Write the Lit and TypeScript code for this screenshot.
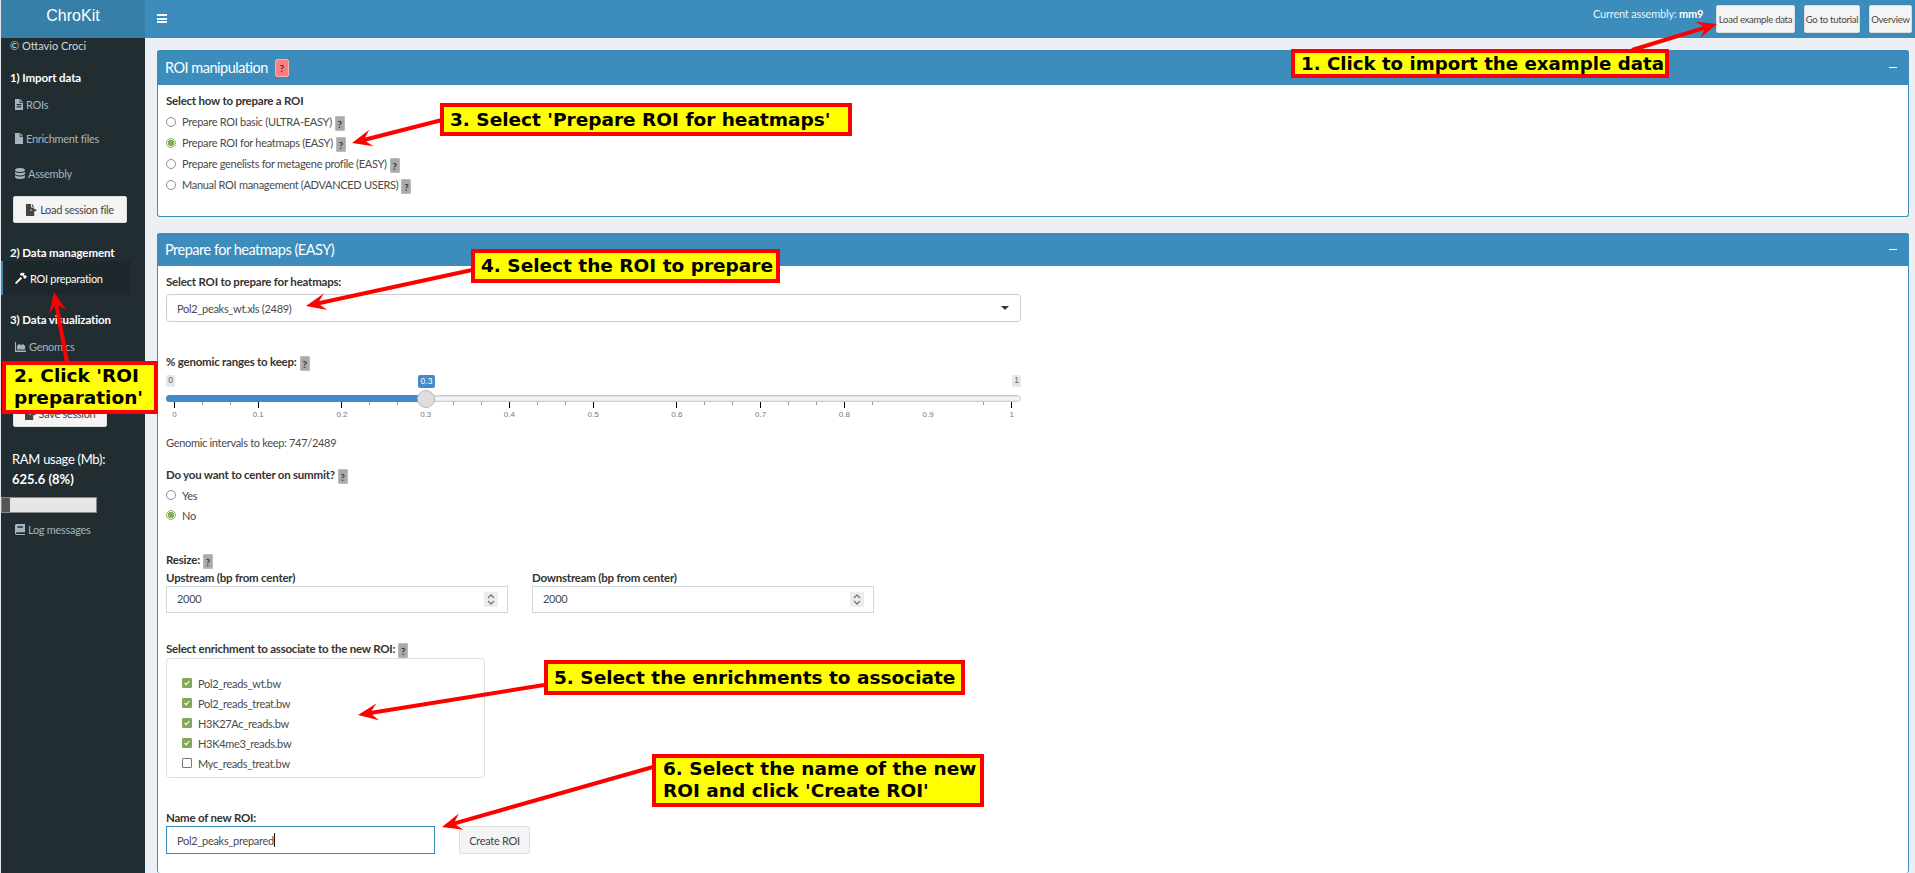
import { LitElement, html, css, svg } from "lit";
import { customElement } from "lit/decorators.js";

type Pt = [number, number];
const arrows: [Pt, Pt][] = [
  [[1632, 50], [1717, 24]],
  [[442, 120], [352, 143]],
  [[472, 270], [306, 306]],
  [[67, 362], [54, 292]],
  [[544, 685], [358, 715]],
  [[653, 767], [442, 827]],
];

function arrowPoints([a, b]: [Pt, Pt]): string {
  const dx = b[0] - a[0], dy = b[1] - a[1];
  const len = Math.hypot(dx, dy);
  const ux = dx / len, uy = dy / len, nx = -uy, ny = ux;
  const at = (along: number, side: number) =>
    `${(b[0] - ux * along + nx * side).toFixed(1)},${(b[1] - uy * along + ny * side).toFixed(1)}`;
  return [
    at(0, 0), at(20, 8.5), at(14, 2), at(len, 2), at(len, -2), at(14, -2), at(20, -8.5),
  ].join(" ");
}

const ticks = Array.from({ length: 31 }, (_, i) => i).filter(
  (i) => ![4, 5, 16, 17, 26, 28, 27].includes(i)
);
const labels = ["0", "0.1", "0.2", "0.3", "0.4", "0.5", "0.6", "0.7", "0.8", "0.9", "1"];

const help = html`<span class="help">?</span>`;
const icon = (d: string, cls = "") =>
  html`<svg class="ico ${cls}" viewBox="0 0 12 12" preserveAspectRatio="none" aria-hidden="true"><path d=${d} fill="currentColor" fill-rule="evenodd"></path></svg>`;
const ICONS = {
  fileText: "M0 0h7v4h5v8H0zM8 0l4 3H8zM2.500 5.500h7v1.200h-7zM2.500 8h7v1.200h-7z",
  file: "M0 0h7v4h5v8H0zM8 0l4 3H8z",
  db: "M6 0c3.300 0 6 .9 6 2.200s-2.700 2.200-6 2.200S0 3.500 0 2.200 2.700 0 6 0zM0 4c1.200 1 3.600 1.500 6 1.500S10.800 5 12 4v2.100c0 1.200-2.700 2.100-6 2.100S0 7.300 0 6.100zM0 7.800c1.200 1 3.600 1.500 6 1.500s4.800-.5 6-1.500v2c0 1.200-2.700 2.200-6 2.200s-6-1-6-2.200z",
  exp: "M0 0h5.500v3.500H9v2H5v1.500h4V12H0zM6.500 0 9 2.500H6.500zM8.500 4.300 12 6.300 8.500 8.300V7H6V5.600h2.500z",
  hammer: "M.5 10.200 5.700 5l1.400 1.400-5.200 5.200c-.4.400-1 .4-1.400 0s-.4-1 0-1.400zM4.800 2.200C6.400.5 8.800.5 10 1.500l-1.300.4.900 1.500.8-.2 1.600 1.500-2.200 2.200-1.500-1.500.2-.8-1.500-1.400-.9.500z",
  chart: "M0 1h1.200v9.300H12V12H0zM2.200 9.400V5.800L4.500 3l2.200 1.700L8.800 3.200 11 5.500v3.900z",
  book: "M1.800 0H12v9H2.200c-.6 0-1 .4-1 .9s.4 1 1 1H12V12H1.800C.8 12 0 11.200 0 10.200V1.800C0 .8.800 0 1.800 0zM3 2.500V4.200h6.500V2.500z",
};

@customElement("app-root")
export class AppRoot extends LitElement {
  static styles = css`
    :host {
      display: block;
      position: relative;
      width: 100%;
      height: 873px;
      overflow: hidden;
      background: #ecf0f5;
      font-family: "Lato", "Noto Sans", sans-serif;
      font-size: 11px;
      letter-spacing: -0.3px;
      color: #333;
      box-sizing: border-box;
      border-left: 1px solid #e4e8ee;
    }
    * { box-sizing: border-box; }
    .top { display: flex; height: 38px; background: #3c8dbc; }
    .logo {
      width: 144px; background: #367fa9; color: #fff;
      font-family: "Liberation Sans", sans-serif; font-size: 16px; letter-spacing: 0;
      text-align: center; line-height: 31px;
    }
    .burger { width: 10px; margin: 14px 0 0 12px; height: 9px; display: flex; flex-direction: column; justify-content: space-between; }
    .burger i { display: block; height: 2px; background: #fff; }
    .topright { margin-left: auto; display: flex; align-items: flex-start; padding-top: 5px; padding-right: 3px; }
    .assembly { color: #e8f1f7; margin: 2px 11px 0 0; width: 112px; white-space: nowrap; letter-spacing: -0.2px; }
    .assembly b { color: #fff; }
    .tb {
      height: 28px; background: #f4f4f4; border: 1px solid #ddd; border-radius: 2px; letter-spacing: -0.25px;
      font-size: 9.500px; color: #444; display: flex; align-items: center; justify-content: center; margin-left: 9px; white-space: nowrap;
    }
    .tb.a { width: 79px; margin-left: 0; }
    .tb.b { width: 56px; }
    .tb.c { width: 43px; }
    .main { display: flex; height: 835px; overflow: hidden; }
    .side { width: 144px; background: #222d32; color: #b8c7ce; flex: none; }
    .copy { height: 16px; line-height: 16px; padding-left: 9px; color: #cfd8dc; letter-spacing: 0; }
    .sh { height: 16px; line-height: 16px; padding-left: 9px; color: #fff; font-weight: 700; font-size: 11.500px; letter-spacing: -0.1px; white-space: nowrap; }
    .mi { display: flex; align-items: center; gap: 3px; padding-left: 14px; color: #a5b5bd; white-space: nowrap; }
    .mi.h34 { height: 34px; }
    .mi.h35 { height: 35px; }
    .ico { width: 8px; height: 11px; flex: none; }
    .ico.w10 { width: 10px; }
    .ico.w11 { width: 11px; }
    .mi.active {
      width: 130px; color: #fff; background: #1e282c; border-left: 2px solid #3c8dbc; padding-left: 12px;
    }
    .mi.active .ico { width: 12px; height: 12px; }
    .sbtn {
      margin-left: 12px; height: 27px; background: #f4f4f4; border: 1px solid #ddd; border-radius: 2px;
      color: #444; display: flex; align-items: center; justify-content: center; gap: 3px; white-space: nowrap;
    }
    .sbtn .ico { width: 11px; height: 12px; }
    .ram { padding-left: 11px; color: #fff; font-size: 13px; letter-spacing: -0.3px; line-height: 20px; height: 20px; white-space: nowrap; }
    .ramv { padding-left: 11px; color: #fff; font-weight: 700; font-size: 13px; letter-spacing: 0; line-height: 21px; height: 19px; }
    .bar { width: 96px; height: 16px; background: #e6e6e6; border: 1px solid #888; margin-top: 9px; }
    .bar i { display: block; width: 8px; height: 100%; background: #555; }
    .logrow { margin-top: -1px; }
    .content { flex: 1; display: flex; flex-direction: column; padding: 12px 6px 0 12px; min-width: 0; }
    .box { background: #fff; border: 1px solid #3c8dbc; border-top: 0; border-radius: 3px; }
    .box + .box { margin-top: 16px; border-bottom: 0; flex: 1; }
    .bh {
      height: 35px; margin: 0 -1px; background: #3c8dbc; color: #fff; border-radius: 3px 3px 0 0;
      display: flex; align-items: center; padding-left: 8px; font-size: 14.500px; letter-spacing: -0.5px; position: relative;
    }
    .box + .box .bh { height: 33px; }
    .minus { margin-left: auto; margin-right: 12px; width: 8px; height: 1.500px; background: #fff; }
    .hr {
      margin-left: 7px; width: 14px; height: 18px; background: #ff7f7f; border: 1px solid #f8b0b0; border-radius: 2px;
      color: #333; font-size: 10px; font-weight: 700; text-align: center; line-height: 17px; margin-top: 1px; letter-spacing: 0;
    }
    .body { padding: 8px 8px 0 8px; }
    .box:first-of-type .body { height: 131px; }
    .lbl { height: 16px; line-height: 16px; font-weight: 700; font-size: 11.500px; letter-spacing: -0.22px; white-space: nowrap; display: flex; align-items: center; }
    .help {
      display: inline-block; width: 10px; height: 15px; background: #aaa; border: 1px solid #bbb; color: #333; letter-spacing: 0;
      font-size: 9.500px; font-weight: 700; text-align: center; line-height: 15px; margin: 3px 0 0 3px; flex: none; border-radius: 1px;
    }
    .row { display: flex; align-items: center; white-space: nowrap; color: #4a4a4a; }
    .row.r21 { height: 21px; }
    .row.r20 { height: 20px; }
    .row .t { margin-left: 6px; }
    .radio { width: 10px; height: 10px; border-radius: 50%; border: 1px solid #8b8b98; background: #fff; flex: none; }
    .radio.on { border-color: #8fb269; background: radial-gradient(circle, #84ad54 0 3.2px, #fff 3.6px); }
    .field { width: 855px; height: 28px; border: 1px solid #ccc; border-radius: 4px; margin-top: 4px; display: flex; align-items: center; padding-left: 10px; color: #4a4a4a; position: relative; }
    .caret { position: absolute; right: 11px; top: 11px; width: 0; height: 0; border: 4px solid transparent; border-top-color: #333; border-bottom: 0; }
    .m32 { margin-top: 32px; }
    .slider { position: relative; width: 855px; height: 61px; letter-spacing: 0; }
    .tag { position: absolute; top: 5px; height: 12px; background: #e6e6e6; color: #666; font-family: "Liberation Sans", sans-serif; font-size: 8.500px; line-height: 11px; text-align: center; border-radius: 2px; width: 9px; }
    .tag.v { left: 252px; width: 17px; top: 5px; height: 13px; line-height: 13px; background: #428bca; color: #fff; }
    .tag.max { right: 0; }
    .track { position: absolute; top: 25px; left: 0; right: 0; height: 7px; border-radius: 4px; background: linear-gradient(#d8d8d8, #fbfbfb 40%, #e6e6e6); border: 1px solid #ccc; }
    .fill { position: absolute; top: 25px; left: 0; width: 260px; height: 7px; background: #428bca; border-radius: 4px 0 0 4px; }
    .handle { position: absolute; left: 251px; top: 20px; width: 18px; height: 18px; border-radius: 50%; background: #dedede; border: 1px solid #bbb; }
    .tick { position: absolute; top: 32px; width: 1px; height: 3px; background: #999; }
    .tick.maj { height: 6px; background: #000; }
    .tl { position: absolute; top: 40px; width: 20px; margin-left: -10px; text-align: center; font-family: "Liberation Sans", sans-serif; font-size: 8px; color: #777; line-height: 10px; }
    .note1 { margin-top: 4px; height: 16px; line-height: 16px; color: #4a4a4a; }
    .m16 { margin-top: 16px; }
    .m27 { margin-top: 27px; }
    .radios { margin-top: 2px; }
    .inputs { display: flex; gap: 24px; }
    .inputs .lbl { height: 16px; margin-top: 2px; }
    .num { width: 342px; height: 27px; border: 1px solid #d2d6de; display: flex; align-items: center; padding-left: 10px; padding-bottom: 2px; color: #4a4a4a; position: relative; }
    .spin { position: absolute; right: 9px; top: 5px; width: 14px; height: 15px; background: #ededed; color: #666; }
    .spin svg { display: block; width: 100%; height: 100%; }
    .m28 { margin-top: 28px; }
    .chk { width: 319px; height: 120px; border: 1px solid #ddd; border-radius: 4px; margin-top: 1px; padding: 14px 0 0 15px; }
    .cb { width: 10px; height: 10px; flex: none; border-radius: 1px; border: 1px solid #777; background: #fff; }
    .cb.on { border-color: #84a857; background: #84a857; }
    .cb svg { display: block; width: 100%; height: 100%; }
    .m32b { margin-top: 32px; }
    .last { display: flex; gap: 24px; }
    .txt { width: 269px; height: 28px; border: 1px solid #3c8dbc; display: flex; align-items: center; padding-left: 10px; color: #4a4a4a; }
    .cursor { display: inline-block; width: 1px; height: 14px; background: #111; }
    .create { width: 71px; height: 28px; background: #f4f4f4; border: 1px solid #ddd; border-radius: 2px; color: #444; display: flex; align-items: center; justify-content: center; }
    .overlay { position: absolute; left: -1px; top: 0; width: 1915px; height: 873px; pointer-events: none; }
    .n {
      position: absolute; background: #ff0; border: 4px solid #f00; color: #000; letter-spacing: 0;
      font-family: "DejaVu Sans", sans-serif; font-weight: 700; font-size: 18.500px; line-height: 21px; padding: 0 6px; white-space: nowrap;
    }
    .n1 { left: 1290px; top: 49px; width: 378px; height: 29px; line-height: 21px; font-size: 18.200px; }
    .n2 { left: 1px; top: 361px; width: 156px; height: 53px; padding-left: 8px; line-height: 22px; }
    .n3 { left: 439px; top: 103px; width: 412px; height: 33px; line-height: 25px; }
    .n4 { left: 470px; top: 249px; width: 309px; height: 34px; line-height: 26px; }
    .n5 { left: 543px; top: 660px; width: 421px; height: 35px; line-height: 27px; }
    .n6 { left: 651px; top: 754px; width: 332px; height: 53px; line-height: 22px; padding-left: 7px; }
  `;

  render() {
    const spin = html`<span class="spin"><svg viewBox="0 0 14 15"><path d="M4 6l3-3 3 3M4 9l3 3 3-3" fill="none" stroke="#777" stroke-width="1.300"></path></svg></span>`;
    return html`
      <div class="top">
        <div class="logo">ChroKit</div>
        <div class="burger"><i></i><i></i><i></i></div>
        <div class="topright">
          <span class="assembly">Current assembly: <b>mm9</b></span>
          <div class="tb a">Load example data</div>
          <div class="tb b">Go to tutorial</div>
          <div class="tb c">Overview</div>
        </div>
      </div>
      <div class="main">
        <aside class="side">
          <div class="copy">© Ottavio Croci</div>
          <div class="sh" style="margin-top:16px">1) Import data</div>
          <div class="mi h34" style="margin-top:1px">${icon(ICONS.fileText)}ROIs</div>
          <div class="mi h35">${icon(ICONS.file)}Enrichment files</div>
          <div class="mi h35">${icon(ICONS.db, "w10")}Assembly</div>
          <div class="sbtn" style="margin-top:5px;width:114px">${icon(ICONS.exp)}Load session file</div>
          <div class="sh" style="margin-top:22px">2) Data management</div>
          <div class="mi h34 active">${icon(ICONS.hammer)}ROI preparation</div>
          <div class="sh" style="margin-top:17px">3) Data visualization</div>
          <div class="mi h34" style="margin-top:1px">${icon(ICONS.chart, "w11")}Genomics</div>
          <div class="sbtn" style="margin-top:37px;width:94px">${icon(ICONS.exp)}Save session</div>
          <div class="ram" style="margin-top:22px">RAM usage (Mb):</div>
          <div class="ramv">625.6 (8%)</div>
          <div class="bar"><i></i></div>
          <div class="mi h34 logrow">${icon(ICONS.book, "w10")}Log messages</div>
        </aside>
        <div class="content">
          <section class="box">
            <div class="bh">ROI manipulation<span class="hr">?</span><span class="minus"></span></div>
            <div class="body">
              <div class="lbl">Select how to prepare a ROI</div>
              <div class="row r21" style="margin-top:2px"><span class="radio"></span><span class="t">Prepare ROI basic (ULTRA-EASY)</span>${help}</div>
              <div class="row r21"><span class="radio on"></span><span class="t">Prepare ROI for heatmaps (EASY)</span>${help}</div>
              <div class="row r21"><span class="radio"></span><span class="t">Prepare genelists for metagene profile (EASY)</span>${help}</div>
              <div class="row r21"><span class="radio"></span><span class="t">Manual ROI management (ADVANCED USERS)</span>${help}</div>
            </div>
          </section>
          <section class="box">
            <div class="bh">Prepare for heatmaps (EASY)<span class="minus"></span></div>
            <div class="body">
              <div class="lbl">Select ROI to prepare for heatmaps:</div>
              <div class="field">Pol2_peaks_wt.xls (2489)<span class="caret"></span></div>
              <div class="lbl m32">% genomic ranges to keep:${help}</div>
              <div class="slider">
                <span class="tag" style="left:0">0</span>
                <span class="tag v">0.3</span>
                <span class="tag max">1</span>
                <div class="track"></div>
                <div class="fill"></div>
                ${ticks.map((i) => html`<span class="tick ${i % 3 === 0 ? "maj" : ""}" style="left:${8 + i * 27.91}px"></span>`)}
                <div class="handle"></div>
                ${labels.map((l, i) => html`<span class="tl" style="left:${8.5 + i * 83.73}px">${l}</span>`)}
              </div>
              <div class="note1">Genomic intervals to keep: 747/2489</div>
              <div class="lbl m16">Do you want to center on summit?${help}</div>
              <div class="radios">
                <div class="row r20"><span class="radio"></span><span class="t">Yes</span></div>
                <div class="row r20"><span class="radio on"></span><span class="t">No</span></div>
              </div>
              <div class="lbl m27">Resize:${help}</div>
              <div class="inputs">
                <div>
                  <div class="lbl">Upstream (bp from center)</div>
                  <div class="num">2000${spin}</div>
                </div>
                <div>
                  <div class="lbl">Downstream (bp from center)</div>
                  <div class="num">2000${spin}</div>
                </div>
              </div>
              <div class="lbl m28">Select enrichment to associate to the new ROI:${help}</div>
              <div class="chk">
                ${[
                  ["Pol2_reads_wt.bw", true],
                  ["Pol2_reads_treat.bw", true],
                  ["H3K27Ac_reads.bw", true],
                  ["H3K4me3_reads.bw", true],
                  ["Myc_reads_treat.bw", false],
                ].map(
                  ([t, on]) => html`<div class="row r20">
                    <span class="cb ${on ? "on" : ""}">${on ? html`<svg viewBox="0 0 10 10"><path d="M2 5l2 2 4-4.500" fill="none" stroke="#fff" stroke-width="1.400"></path></svg>` : ""}</span>
                    <span class="t">${t}</span>
                  </div>`
                )}
              </div>
              <div class="lbl m32b">Name of new ROI:</div>
              <div class="last">
                <div class="txt">Pol2_peaks_prepared<span class="cursor"></span></div>
                <div class="create">Create ROI</div>
              </div>
            </div>
          </section>
        </div>
      </div>
      <svg class="overlay" viewBox="0 0 1915 873" aria-hidden="true">
        ${arrows.map((a) => svg`<polygon points=${arrowPoints(a)} fill="#f00"></polygon>`)}
      </svg>
      <div class="n n1">1. Click to import the example data</div>
      <div class="n n2">2. Click 'ROI<br />preparation'</div>
      <div class="n n3">3. Select 'Prepare ROI for heatmaps'</div>
      <div class="n n4">4. Select the ROI to prepare</div>
      <div class="n n5">5. Select the enrichments to associate</div>
      <div class="n n6">6. Select the name of the new<br />ROI and click 'Create ROI'</div>
    `;
  }
}
